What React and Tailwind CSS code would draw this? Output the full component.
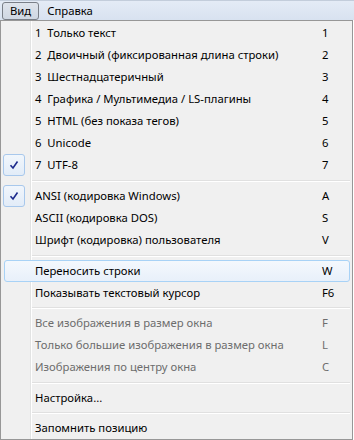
import React from 'react';

const groups = [
  [
    { label: '1  Только текст', key: '1' },
    { label: '2  Двоичный (фиксированная длина строки)', key: '2' },
    { label: '3  Шестнадцатеричный', key: '3' },
    { label: '4  Графика / Мультимедиа / LS-плагины', key: '4' },
    { label: '5  HTML (без показа тегов)', key: '5' },
    { label: '6  Unicode', key: '6' },
    { label: '7  UTF-8', key: '7', checked: true },
  ],
  [
    { label: 'ANSI (кодировка Windows)', key: 'A', checked: true },
    { label: 'ASCII (кодировка DOS)', key: 'S' },
    { label: 'Шрифт (кодировка) пользователя', key: 'V' },
  ],
  [
    { label: 'Переносить строки', key: 'W', hover: true },
    { label: 'Показывать текстовый курсор', key: 'F6' },
  ],
  [
    { label: 'Все изображения в размер окна', key: 'F', disabled: true },
    { label: 'Только большие изображения в размер окна', key: 'L', disabled: true },
    { label: 'Изображения по центру окна', key: 'C', disabled: true },
  ],
  [{ label: 'Настройка...', key: '' }],
  [{ label: 'Запомнить позицию', key: '' }],
];

// separator heights before each group (group 0 has none)
const sepClass = ['', 'h-[9px]', 'h-[9px]', 'h-[8px]', 'h-[9px]', 'h-[8px]'];

function Check() {
  return (
    <div className="w-[22px] h-[22px] rounded-[3px] border border-[#a8c8ec] bg-gradient-to-b from-[#f1f6fc] to-[#e2ecf8] flex items-center justify-center">
      <svg width="10" height="10" viewBox="0 0 10 10">
        <path d="M1.5 5.2 L4 8 L8.5 1.5" fill="none" stroke="#1c2a8c" strokeWidth="1.6" />
      </svg>
    </div>
  );
}

function Item({ item }) {
  const color = item.disabled ? 'text-[#6d6d6d]' : 'text-black';
  return (
    <div className="relative h-[22px] flex items-center">
      {item.hover && (
        <div className="absolute left-[3px] right-[2px] inset-y-0 rounded-[3px] border border-[#a8d2f6] bg-gradient-to-b from-[#f4f8fd] to-[#e8f0fa]" />
      )}
      <div className="relative w-[34px] h-full pl-[2px] flex items-center">{item.checked && <Check />}</div>
      <span className={`relative flex-1 whitespace-pre ${color}`}>{item.label}</span>
      <span className={`relative w-[30px] ${color}`}>{item.key}</span>
    </div>
  );
}

function Separator({ className }) {
  return (
    <div className={`${className} flex flex-col justify-center pl-[31px] pr-[2px]`}>
      <div className="h-px bg-[#e0e0e0]" />
      <div className="h-px bg-white" />
    </div>
  );
}

export default function App() {
  return (
    <div className="w-[354px] h-[440px] overflow-hidden bg-white text-[11.3px] leading-none" style={{ fontFamily: '"Noto Sans", sans-serif' }}>
      <div className="h-[20px] flex items-center gap-[7px] px-[2px] border-t border-[#c3cddb] bg-gradient-to-b from-[#e4ebf6] to-[#d8e2f0]">
        <div className="h-[18px] px-[7px] flex items-center rounded-[3px] border border-[#7a7f88] bg-gradient-to-b from-[#dfe4ec] to-[#cfd7e3]">Вид</div>
        <div className="h-[18px] px-[1px] flex items-center">Справка</div>
      </div>
      <div className="relative w-[353px] h-[420px] border border-[#979797] bg-[#f0f0f0] pt-[1px]">
        <div className="absolute left-[29px] inset-y-0 w-[2px] border-l border-[#e2e3e3] bg-white" />
        {groups.map((g, gi) => (
          <div key={gi}>
            {gi > 0 && <Separator className={sepClass[gi]} />}
            {g.map((it) => (
              <Item key={it.label} item={it} />
            ))}
          </div>
        ))}
      </div>
    </div>
  );
}
